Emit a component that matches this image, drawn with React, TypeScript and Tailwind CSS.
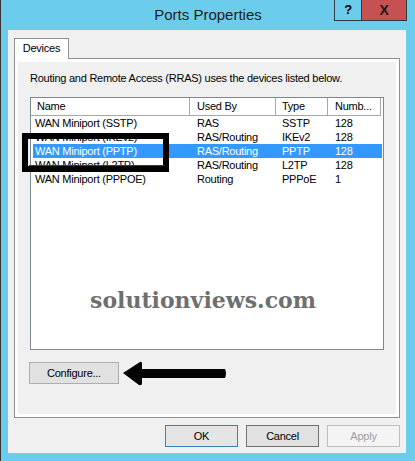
import React from "react";

const rows = [
  { name: "WAN Miniport (SSTP)", usedBy: "RAS", type: "SSTP", num: "128" },
  { name: "WAN Miniport (IKEv2)", usedBy: "RAS/Routing", type: "IKEv2", num: "128" },
  { name: "WAN Miniport (PPTP)", usedBy: "RAS/Routing", type: "PPTP", num: "128", selected: true },
  { name: "WAN Miniport (L2TP)", usedBy: "RAS/Routing", type: "L2TP", num: "128" },
  { name: "WAN Miniport (PPPOE)", usedBy: "Routing", type: "PPPoE", num: "1" },
];

const App = () => {
  return (
    <div className="relative h-[461px] w-[415px] overflow-hidden border-l border-[#333333] bg-[#6BCDEB] font-['Liberation_Sans',Arial,sans-serif] text-[11px] tracking-[-0.25px] text-black">
      {/* title bar */}
      <div className="relative flex h-[30px] items-center justify-center">
        <span className="text-[15px] tracking-normal text-[#1e1e1e]">Ports Properties</span>
        <div className="absolute right-[8px] top-0 flex">
          <div className="flex h-[21px] w-[27px] items-center justify-center border-b border-l border-[#2e3a40] text-[13px] font-bold">
            ?
          </div>
          <div className="flex h-[21px] w-[46px] items-center justify-center border-b border-l border-r border-[#2e3a40] bg-[#C75050] text-[14px] font-bold text-[#1a1a1a]">
            X
          </div>
        </div>
      </div>

      {/* client area */}
      <div className="ml-[7px] flex h-[423px] w-[398px] flex-col bg-[#F0F0F0] px-[6px] pt-[8px]">
        <div className="relative z-10 -mb-px flex h-[21px] w-[55px] items-center justify-center border border-b-0 border-[#8E8F8F] bg-white pb-px">
          Devices
        </div>
        <div className="h-[360px] border border-[#8E8F8F] bg-white p-[3px]">
          <div className="flex h-full flex-col bg-[#F0F0F0] pl-[12px] pt-[9px]">
            <p className="leading-[14px]">Routing and Remote Access (RRAS) uses the devices listed below.</p>

            <div className="mt-[12px] h-[253px] w-[354px] border border-[#828790] bg-white">
              <div className="flex h-[18px] leading-[17px]">
                <div className="w-[159px] border-b border-r border-[#A8A8A8] pl-[6px]">Name</div>
                <div className="w-[86px] border-b border-r border-[#A8A8A8] pl-[7px]">Used By</div>
                <div className="w-[52px] border-b border-r border-[#A8A8A8] pl-[6px]">Type</div>
                <div className="w-[53px] border-b border-r border-[#A8A8A8] pl-[7px]">Numb...</div>
              </div>
              <div className="flex flex-col">
                {rows.map((r) => (
                  <div
                    key={r.name}
                    className={
                      r.selected
                        ? "mx-[2px] flex h-[14px] w-[349px] bg-[#3399FF] leading-[14px] text-white"
                        : "mx-[2px] flex h-[14px] w-[349px] leading-[14px]"
                    }
                  >
                    <div className="w-[157px] pl-[2px]">{r.name}</div>
                    <div className="w-[86px] pl-[7px]">{r.usedBy}</div>
                    <div className="w-[52px] pl-[6px]">{r.type}</div>
                    <div className="w-[52px] pl-[7px]">{r.num}</div>
                  </div>
                ))}
              </div>
            </div>

            <button className="-ml-px mt-[12px] flex h-[22px] w-[90px] items-center justify-center border border-[#ADADAD] bg-[#E1E1E1]">
              Configure...
            </button>
          </div>
        </div>

        <div className="mt-[7px] flex justify-end gap-[8px]">
          <button className="flex h-[22px] w-[73px] items-center justify-center border border-[#3C7FB1] bg-[#E5E5E5]">
            OK
          </button>
          <button className="flex h-[22px] w-[73px] items-center justify-center border border-[#707070] bg-[#E1E1E1]">
            Cancel
          </button>
          <button className="flex h-[22px] w-[73px] items-center justify-center border border-[#BFBFBF] bg-[#F4F4F4] text-[#A0A0A0]">
            Apply
          </button>
        </div>
      </div>

      {/* annotations over the screenshot */}
      <div className="absolute left-[21px] top-[133px] h-[39px] w-[147px] border-[6px] border-black" />
      <div className="absolute left-[28px] top-[165px] h-px w-[135px] bg-[#8B1A1A]" />
      <div className="absolute left-[89px] top-[284px] font-['DejaVu_Serif',serif] text-[22px] font-bold tracking-normal text-[#6F6F6F]">
        solutionviews.com
      </div>
      <svg className="absolute left-[120px] top-[361px]" width="108" height="26" viewBox="0 0 108 26">
        <path
          d="M2 12 L19 1 Q21 0 21 3 L21 8 L104 8 Q106 12 104 17 L21 17 L21 22 Q21 25 18 24 Z"
          fill="#000"
        />
      </svg>
    </div>
  );
};

export default App;
